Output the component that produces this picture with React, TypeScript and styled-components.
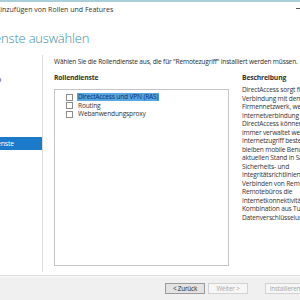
import React from "react";
import styled, { createGlobalStyle } from "styled-components";

const Global = createGlobalStyle`
  html, body { margin: 0; padding: 0; width: 300px; height: 300px; overflow: hidden; background: #fff; }
  body { font-family: "Open Sans", "Noto Sans", sans-serif; color: #2b2b2b; letter-spacing: -0.17px; }
  * { box-sizing: border-box; }
`;

const SHIFT = 80;

const Window = styled.div`
  width: ${300 + SHIFT}px;
  height: 300px;
  margin-left: -${SHIFT}px;
  display: flex;
  flex-direction: column;
  background: #fff;
  border-top: 2px solid #a9cfdb;
  overflow: hidden;
`;

const TitleBar = styled.div`
  height: 15px;
  flex: none;
  display: flex;
  align-items: center;
  padding-left: ${SHIFT - 5}px;
  font-size: 7px;
  letter-spacing: 0;
  color: #333;
  position: relative;
`;

const Minimize = styled.span`
  position: absolute;
  right: 0;
  top: 6px;
  width: 4px;
  height: 1px;
  background: #555;
`;

const Header = styled.div`
  height: 38px;
  flex: none;
  display: flex;
  align-items: center;
  padding-left: ${SHIFT - 51}px;
  padding-top: 4px;
`;

const Heading = styled.h1`
  margin: 0;
  font-size: 13px;
  font-weight: 300;
  letter-spacing: -0.2px;
  color: #3a8ea2;
  white-space: nowrap;
`;

const Main = styled.div`
  flex: 1;
  display: flex;
  min-height: 0;
`;

const Nav = styled.nav`
  width: ${SHIFT + 43}px;
  flex: none;
  border-right: 1px solid #dadada;
  padding-top: 5px;
  margin-bottom: 3px;
  overflow: hidden;
`;

const NavItem = styled.div<{ $active?: boolean; $sub?: boolean; $disabled?: boolean }>`
  height: 12.8px;
  display: flex;
  align-items: center;
  padding-left: ${(p) => (p.$sub ? SHIFT - 28 : SHIFT - 46)}px;
  font-size: 7px;
  white-space: nowrap;
  background: ${(p) => (p.$active ? "#1c7acb" : "transparent")};
  color: ${(p) => (p.$active ? "#fff" : p.$disabled ? "#9a9a9a" : "#2b2b2b")};
`;

const Content = styled.div`
  flex: 1;
  padding: 2px 0 0 11px;
  display: flex;
  flex-direction: column;
  min-width: 0;
`;

const Intro = styled.p`
  margin: 0;
  height: 10px;
  font-size: 6.6px;
  line-height: 10px;
  white-space: nowrap;
`;

const Columns = styled.div`
  display: flex;
  gap: 13px;
  margin-top: 6px;
`;

const ListColumn = styled.div`
  width: 175px;
  flex: none;
  display: flex;
  flex-direction: column;
`;

const Label = styled.div`
  font-size: 6.8px;
  font-weight: 700;
  height: 9px;
  line-height: 9px;
  color: #333;
  white-space: nowrap;
`;

const ListBox = styled.div`
  margin-top: 7px;
  height: 177px;
  border: 1px solid #c4c4c4;
  padding: 3px 0 0 11px;
`;

const Row = styled.div`
  height: 8.5px;
  display: flex;
  align-items: center;
  gap: 4px;
  font-size: 6.6px;
  white-space: nowrap;
`;

const Box = styled.span`
  width: 7px;
  height: 7px;
  flex: none;
  border: 1px solid #8a8a8a;
  background: #fff;
`;

const RowText = styled.span<{ $selected?: boolean }>`
  line-height: 8px;
  padding: 0 1px;
  background: ${(p) => (p.$selected ? "#55a6e3" : "transparent")};
  color: ${(p) => (p.$selected ? "#10306a" : "#333")};
`;

const DescColumn = styled.div`
  flex: 1;
  display: flex;
  flex-direction: column;
  min-width: 0;
`;

const DescText = styled.div`
  margin-top: 4px;
  font-size: 6.6px;
  line-height: 8.5px;
  color: #333;
`;

const DescLine = styled.div`
  white-space: nowrap;
`;

const Footer = styled.div`
  height: 25px;
  flex: none;
  background: #f0f0f0;
  border-top: 1px solid #dcdcdc;
  box-shadow: inset 0 1px 0 #fafafa;
  display: flex;
  align-items: center;
  padding-left: ${SHIFT + 165}px;
  gap: 3px;
`;

const Button = styled.button<{ $disabled?: boolean; $spaced?: boolean }>`
  width: 40px;
  height: 11px;
  padding: 0;
  margin-left: ${(p) => (p.$spaced ? 14 : 0)}px;
  flex: none;
  font-family: inherit;
  letter-spacing: inherit;
  font-size: 6.3px;
  line-height: 9px;
  border: 1px solid ${(p) => (p.$disabled ? "#d2d2d2" : "#9a9a9a")};
  background: ${(p) => (p.$disabled ? "#f6f6f6" : "#e3e3e3")};
  color: ${(p) => (p.$disabled ? "#a8a8a8" : "#222")};
`;

const navItems = [
  { label: "Vor Beginn" },
  { label: "Installationstyp" },
  { label: "Serverauswahl" },
  { label: "Serverrollen" },
  { label: "Features" },
  { label: "Remotezugriff" },
  { label: "Rollendienste", sub: true, active: true },
  { label: "Bestätigung", disabled: true },
  { label: "Ergebnisse", disabled: true },
];

const services = [
  { label: "DirectAccess und VPN (RAS)", selected: true },
  { label: "Routing" },
  { label: "Webanwendungsproxy" },
];

const descLines = [
  "DirectAccess sorgt für eine nahtlose",
  "Verbindung mit dem",
  "Firmennetzwerk, wenn eine",
  "Internetverbindung besteht. Mit",
  "DirectAccess können Remotecomputer",
  "immer verwaltet werden, wenn ein",
  "Internetzugriff besteht. Dadurch",
  "bleiben mobile Benutzer auf dem",
  "aktuellen Stand in Sachen",
  "Sicherheits- und",
  "Integritätsrichtlinien. VPN dient",
  "Verbinden von Remotebenutzern und",
  "Remotebüros die",
  "Internetkonnektivität über eine",
  "Kombination aus Tunneling und",
  "Datenverschlüsselung.",
];

export default function App() {
  return (
    <>
      <Global />
      <Window>
        <TitleBar>
          Hinzufügen von Rollen und Features
          <Minimize />
        </TitleBar>
        <Header>
          <Heading>Rollendienste auswählen</Heading>
        </Header>
        <Main>
          <Nav>
            {navItems.map((n) => (
              <NavItem key={n.label} $active={n.active} $sub={n.sub} $disabled={n.disabled}>
                {n.label}
              </NavItem>
            ))}
          </Nav>
          <Content>
            <Intro>
              Wählen Sie die Rollendienste aus, die für "Remotezugriff" installiert werden müssen.
            </Intro>
            <Columns>
              <ListColumn>
                <Label>Rollendienste</Label>
                <ListBox>
                  {services.map((s) => (
                    <Row key={s.label}>
                      <Box />
                      <RowText $selected={s.selected}>{s.label}</RowText>
                    </Row>
                  ))}
                </ListBox>
              </ListColumn>
              <DescColumn>
                <Label>Beschreibung</Label>
                <DescText>
                  {descLines.map((l, i) => (
                    <DescLine key={i}>{l}</DescLine>
                  ))}
                </DescText>
              </DescColumn>
            </Columns>
          </Content>
        </Main>
        <Footer>
          <Button>&lt; Zurück</Button>
          <Button $disabled>Weiter &gt;</Button>
          <Button $disabled $spaced>Installieren</Button>
        </Footer>
      </Window>
    </>
  );
}
